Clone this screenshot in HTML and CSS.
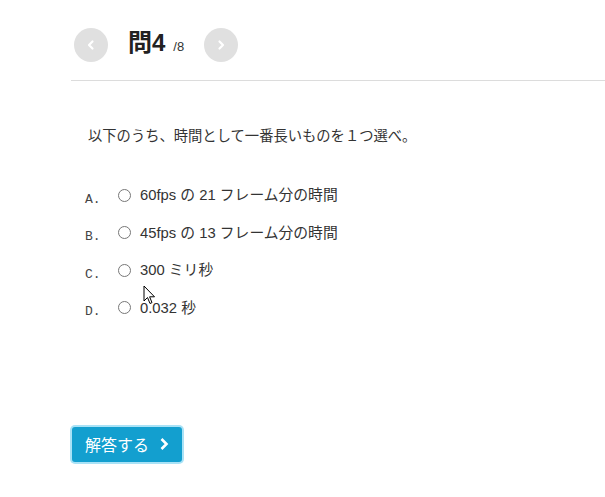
FILE: index.html
```html
<!DOCTYPE html>
<html lang="ja">
<head>
<meta charset="utf-8">
<link rel="stylesheet" href="styles.css">
</head>
<body>
<div class="page">
  <header class="head">
    <span class="nav"><svg width="34" height="34" viewBox="0 0 34 34"><path d="M18.5 13.5 L15 17 L18.5 20.5" fill="none" stroke="#fff" stroke-width="2.2" stroke-linecap="round" stroke-linejoin="round"/></svg></span>
    <h1 class="title">問4<span class="total">/8</span></h1>
    <span class="nav"><svg width="34" height="34" viewBox="0 0 34 34"><path d="M15.5 13.5 L19 17 L15.5 20.5" fill="none" stroke="#fff" stroke-width="2.2" stroke-linecap="round" stroke-linejoin="round"/></svg></span>
  </header>
  <p class="question">以下のうち、時間として一番長いものを１つ選べ。</p>
  <ul class="options">
    <li class="opt"><span class="key">A.</span><span class="radio"></span><span class="txt">60fps の 21 フレーム分の時間</span></li>
    <li class="opt"><span class="key">B.</span><span class="radio"></span><span class="txt">45fps の 13 フレーム分の時間</span></li>
    <li class="opt"><span class="key">C.</span><span class="radio"></span><span class="txt">300 ミリ秒</span></li>
    <li class="opt"><span class="key">D.</span><span class="radio"></span><span class="txt">0.032 秒</span></li>
  </ul>
  <div class="actions">
    <button class="submit">解答する<svg width="10" height="14" viewBox="0 0 10 14"><path d="M2.5 2 L7.5 7 L2.5 12" fill="none" stroke="#fff" stroke-width="2.6" stroke-linejoin="miter"/></svg></button>
  </div>
</div>
<svg class="cursor" width="14" height="21" viewBox="0 0 14 21"><path d="M1 1 L1 16 L4.5 12.5 L7 18.5 L9 17.6 L6.6 11.8 L11.5 11.8 Z" fill="#fff" stroke="#000" stroke-width="1" stroke-linejoin="miter"/></svg>
</body>
</html>
```
FILE: styles.css
```css
html, body {
  margin: 0;
  padding: 0;
  background: #fff;
}
body {
  font-family: "Liberation Sans", "Noto Sans CJK JP", sans-serif;
  color: #333;
  width: 605px;
  height: 497px;
  overflow: hidden;
  position: relative;
}
.page {
  padding-left: 71px;
  padding-top: 28px;
}
.head {
  display: flex;
  align-items: center;
  padding-left: 3px;
  padding-bottom: 18px;
  border-bottom: 1px solid #dcdcdc;
  height: 34px;
}
.nav {
  width: 34px;
  height: 34px;
  border-radius: 50%;
  background: #e0e0e0;
  display: block;
}
.nav svg { display: block; }
.title {
  margin: 0 0 0 20px;
  width: 76px;
  font-size: 24px;
  font-weight: bold;
  color: #222;
  line-height: 34px;
  white-space: nowrap;
  font-family: "Liberation Sans", "Noto Sans CJK JP", sans-serif;
}
.total {
  font-size: 13px;
  font-weight: normal;
  margin-left: 8px;
  color: #333;
}
.question {
  margin: 45px 0 0 17px;
  font-size: 14.3px;
  line-height: 20px;
  color: #333;
}
.options {
  list-style: none;
  margin: 39px 0 0 0;
  padding: 0 0 0 14px;
}
.opt {
  display: flex;
  align-items: center;
  height: 20px;
  margin-bottom: 17.5px;
  font-size: 14.8px;
}
.key {
  font-family: "Liberation Mono", monospace;
  font-size: 13px;
  color: #444;
  width: 33px;
  position: relative;
  top: 4px;
}
.radio {
  width: 11px;
  height: 11px;
  border: 1px solid #777;
  border-radius: 50%;
  margin-left: 0;
  margin-right: 9px;
  background: #fff;
}
.txt { color: #333; line-height: 20px; }
.actions {
  margin-top: 109px;
}
.submit {
  display: flex;
  align-items: center;
  gap: 10px;
  background: #139fcf;
  color: #fff;
  border: none;
  border-radius: 3px;
  box-shadow: 0 0 0 2px #a9e2f6;
  height: 35px;
  margin-left: 1px;
  padding: 0 13px 0 13px;
  font-size: 16px;
  font-family: "Noto Sans CJK JP", sans-serif;
}
.submit svg { display: block; }
.cursor {
  position: absolute;
  left: 143px;
  top: 285px;
}
```
